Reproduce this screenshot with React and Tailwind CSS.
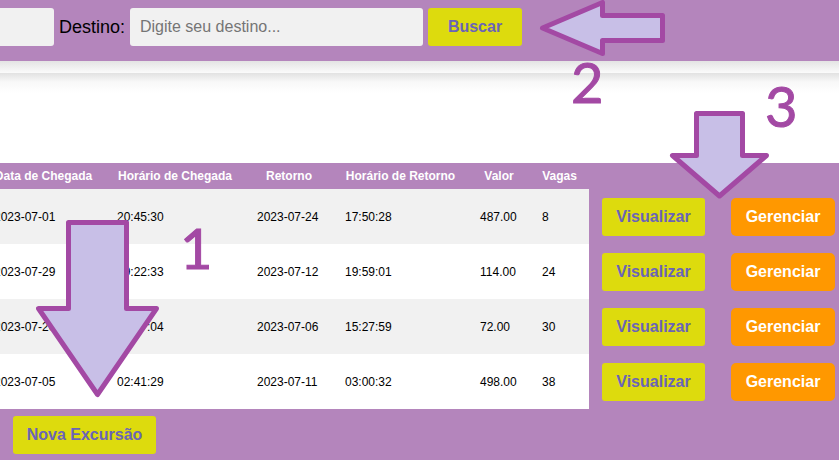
const excursions = [
  { arrival: "2023-07-01", arrivalTime: "20:45:30", back: "2023-07-24", backTime: "17:50:28", price: "487.00", seats: 8 },
  { arrival: "2023-07-29", arrivalTime: "19:22:33", back: "2023-07-12", backTime: "19:59:01", price: "114.00", seats: 24 },
  { arrival: "2023-07-20", arrivalTime: "12:17:04", back: "2023-07-06", backTime: "15:27:59", price: "72.00", seats: 30 },
  { arrival: "2023-07-05", arrivalTime: "02:41:29", back: "2023-07-11", backTime: "03:00:32", price: "498.00", seats: 38 },
];

const columns = [
  { title: "Data de Chegada", width: "w-[123px]" },
  { title: "Horário de Chegada", width: "w-[140px]" },
  { title: "Retorno", width: "w-[88px]" },
  { title: "Horário de Retorno", width: "w-[135px]" },
  { title: "Valor", width: "w-[62px]" },
  { title: "Vagas", width: "w-[59px]" },
];

const yellowButton =
  "h-[38px] shrink-0 whitespace-nowrap rounded-[3px] bg-[#dddb0d] text-base font-bold text-[#6a64b8]";
const field =
  "h-[38px] w-[293px] shrink-0 rounded-[3px] bg-[#f1f1f1] px-[10px] text-base text-black outline-none placeholder:text-[#757575]";

function SearchBar() {
  return (
    <header className="bg-[#b485bc] pt-2 pb-[15px]">
      <form className="-ml-[239px] flex items-center gap-[5px]" onSubmit={(e) => e.preventDefault()}>
        <input className={field} type="text" aria-label="Origem" />
        <label htmlFor="destino" className="w-[66px] shrink-0 text-lg leading-6">
          Destino:
        </label>
        <input id="destino" className={field} type="text" placeholder="Digite seu destino..." />
        <button type="submit" className={`${yellowButton} w-[94px]`}>
          Buscar
        </button>
      </form>
    </header>
  );
}

function ExcursionTable() {
  return (
    <table className="-ml-[18px] w-[866px] table-fixed border-collapse text-left text-xs">
      <colgroup>
        {columns.map((c) => (
          <col key={c.title} className={c.width} />
        ))}
        <col className="w-[129px]" />
        <col className="w-[130px]" />
      </colgroup>
      <thead>
        <tr className="h-[26px] text-white">
          {columns.map((c) => (
            <th key={c.title} className="whitespace-nowrap p-0 text-center font-bold">
              {c.title}
            </th>
          ))}
          <td colSpan={2} />
        </tr>
      </thead>
      <tbody>
        {excursions.map((row) => (
          <tr key={row.arrival} className="group h-[55px]">
            {Object.entries(row).map(([key, value]) => (
              <td key={key} className="bg-white px-3 py-0 group-odd:bg-[#f1f1f1]">
                {value}
              </td>
            ))}
            <td className="px-[13px] py-0">
              <button type="button" className={`${yellowButton} w-full`}>
                Visualizar
              </button>
            </td>
            <td className="px-[13px] py-0">
              <button
                type="button"
                className="h-[38px] w-full rounded-[5px] bg-[#ff9800] text-base font-bold text-white"
              >
                Gerenciar
              </button>
            </td>
          </tr>
        ))}
      </tbody>
    </table>
  );
}

function Arrow({ className, box, points }) {
  return (
    <svg className={`pointer-events-none absolute ${className}`} viewBox={box} aria-hidden="true">
      <polygon points={points} fill="#c8bfe7" stroke="#a349a4" strokeWidth="5" strokeLinejoin="round" />
    </svg>
  );
}

function Step({ className, children }) {
  return (
    <span
      className={`pointer-events-none absolute font-['Lato',sans-serif] text-[56px] leading-[56px] text-[#a349a4] [-webkit-text-stroke:1px_#a349a4] ${className}`}
    >
      {children}
    </span>
  );
}

export default function App() {
  return (
    <div className="relative flex min-h-screen flex-col overflow-hidden bg-white font-['Liberation_Sans',Arial,sans-serif] text-black">
      <SearchBar />
      <div className="h-3 bg-linear-to-b from-[#e4e4e4] to-[#fbfbfb]" />
      <main className="flex grow flex-col">
        <div className="h-[90px] bg-linear-to-b from-[#e2e2e2] via-[#f8f8f8] via-[9px] to-white to-[20px]" />
        <section className="grow bg-[#b485bc]">
          <ExcursionTable />
          <div className="px-[13px] py-[7px]">
            <button type="button" className={`${yellowButton} w-[143px]`}>
              Nova Excursão
            </button>
          </div>
        </section>
      </main>

      <Arrow
        className="left-[36px] top-[219px] h-[179px] w-[124px]"
        box="36 219 124 179"
        points="68.5,222.5 126.5,222.5 126.5,308.5 156.5,308.5 97.5,394.5 38.5,308.5 68.5,308.5"
      />
      <Arrow
        className="left-[539px] top-0 h-[57px] w-[127px]"
        box="539 0 127 57"
        points="542.5,28 602.5,2.5 602.5,15.5 662.5,15.5 662.5,40.5 602.5,40.5 602.5,53.5"
      />
      <Arrow
        className="left-[669px] top-[110px] h-[90px] w-[102px]"
        box="669 110 102 90"
        points="696.5,113.5 742.5,113.5 742.5,155.5 766.5,155.5 719.5,196 672.5,155.5 696.5,155.5"
      />
      <Step className="left-[180px] top-[220px]">1</Step>
      <Step className="left-[571px] top-[54px]">2</Step>
      <Step className="left-[765px] top-[78px]">3</Step>
    </div>
  );
}
